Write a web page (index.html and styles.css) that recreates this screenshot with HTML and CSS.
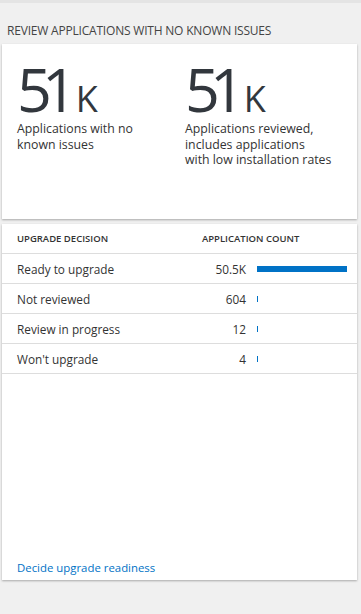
FILE: index.html
```html
<html>

<head>
    <link rel="stylesheet" href="styles.css">
</head>

<body>
    <div class="page">
        <h2 class="section-title">Review applications with no known issues</h2>

        <div class="card summary">
            <div class="stat">
                <div class="stat-value">51<span class="unit">K</span></div>
                <p class="stat-label">Applications with no<br>known issues</p>
            </div>
            <div class="stat stat-right">
                <div class="stat-value">51<span class="unit">K</span></div>
                <p class="stat-label">Applications reviewed,<br>includes applications<br>with low installation rates</p>
            </div>
        </div>

        <div class="card decisions">
            <div class="row head">
                <span class="name">Upgrade decision</span>
                <span class="count">Application count</span>
            </div>
            <div class="row">
                <span class="name">Ready to upgrade</span>
                <span class="num">50.5K</span>
                <span class="bar-track"><span class="bar" style="width: 90px"></span></span>
            </div>
            <div class="row">
                <span class="name">Not reviewed</span>
                <span class="num">604</span>
                <span class="bar-track"><span class="bar tick"></span></span>
            </div>
            <div class="row">
                <span class="name">Review in progress</span>
                <span class="num">12</span>
                <span class="bar-track"><span class="bar tick"></span></span>
            </div>
            <div class="row">
                <span class="name">Won't upgrade</span>
                <span class="num">4</span>
                <span class="bar-track"><span class="bar tick"></span></span>
            </div>
            <a class="more" href="#">Decide upgrade readiness</a>
        </div>
    </div>
</body>

</html>
```

FILE: styles.css
```css
body {
    margin: 0;
    background: #f0f0f0;
    font-family: "Segoe UI", "Open Sans", sans-serif;
    color: #333;
}

.page {
    border-top: 3px solid #e4e4e4;
    padding: 0 4px 0 2px;
}

.section-title {
    margin: 0;
    padding: 19px 0 0 5px;
    height: 22px;
    font-size: 12px;
    font-weight: normal;
    text-transform: uppercase;
    color: #444;
    letter-spacing: -0.2px;
}

.card {
    background: #fff;
    box-shadow: 0 1px 2px rgba(0, 0, 0, 0.3);
}

.summary {
    display: flex;
    height: 175px;
    box-sizing: border-box;
    padding: 23px 0 0 15px;
}

.stat {
    flex: none;
    width: 168px;
}

.stat-right {
    width: 175px;
}

.stat-value {
    font-size: 61px;
    line-height: 44px;
    color: #32373d;
    letter-spacing: -10px;
}

.unit {
    font-size: 36px;
    letter-spacing: -1px;
    margin-left: 9px;
}

.stat-label {
    margin: 0;
    font-size: 12.3px;
    line-height: 15.5px;
    color: #333;
    white-space: nowrap;
}

.decisions {
    margin-top: 5px;
    height: 356px;
    display: flex;
    flex-direction: column;
}

.row {
    display: flex;
    align-items: center;
    height: 29px;
    border-bottom: 1px solid #ddd;
    padding-left: 15px;
    font-size: 11.8px;
}

.row.head {
    font-size: 9.5px;
    font-weight: 600;
    text-transform: uppercase;
    color: #333;
}

.name {
    width: 150px;
}

.count {
    margin-left: 35px;
}

.num {
    width: 79px;
    text-align: right;
}

.bar-track {
    margin-left: 11px;
    display: flex;
    align-items: center;
}

.bar {
    display: block;
    height: 6px;
    background: #0072c6;
}

.bar.tick {
    width: 1px;
}

.more {
    margin-top: auto;
    padding: 0 0 5px 15px;
    font-size: 11.4px;
    color: #0072c6;
    text-decoration: none;
}
```
